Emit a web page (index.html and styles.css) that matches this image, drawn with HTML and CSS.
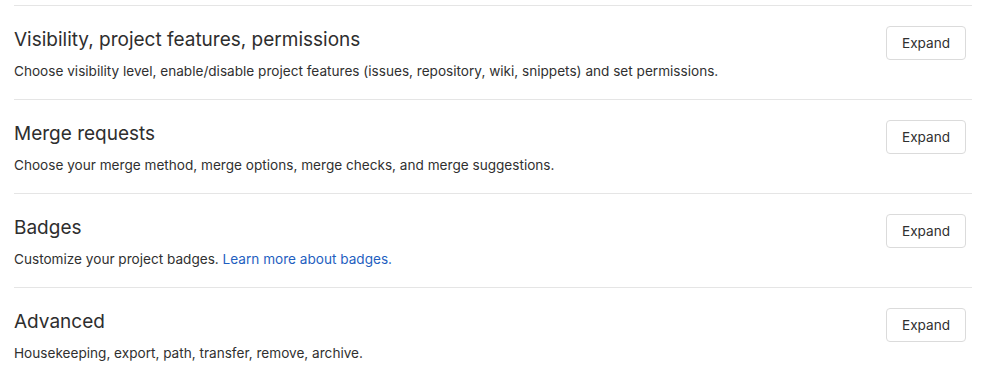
FILE: index.html
```html
<!DOCTYPE html>
<html lang="en">
<head>
    <meta charset="UTF-8">
    <title>Project settings</title>
    <link rel="stylesheet" href="styles.css">
</head>
<body>
    <div class="settings">
        <section class="settings-section">
            <div class="settings-header">
                <div>
                    <h4>Visibility, project features, permissions</h4>
                    <p>Choose visibility level, enable/disable project features (issues, repository, wiki, snippets) and set permissions.</p>
                </div>
                <button class="btn">Expand</button>
            </div>
        </section>

        <section class="settings-section">
            <div class="settings-header">
                <div>
                    <h4>Merge requests</h4>
                    <p>Choose your merge method, merge options, merge checks, and merge suggestions.</p>
                </div>
                <button class="btn">Expand</button>
            </div>
        </section>

        <section class="settings-section">
            <div class="settings-header">
                <div>
                    <h4>Badges</h4>
                    <p>Customize your project badges. <a href="#">Learn more about badges.</a></p>
                </div>
                <button class="btn">Expand</button>
            </div>
        </section>

        <section class="settings-section">
            <div class="settings-header">
                <div>
                    <h4>Advanced</h4>
                    <p>Housekeeping, export, path, transfer, remove, archive.</p>
                </div>
                <button class="btn">Expand</button>
            </div>
        </section>
    </div>
</body>
</html>
```

FILE: styles.css
```css
* {
    margin: 0;
    padding: 0;
    box-sizing: border-box;
}

body {
    font-family: Inter, "Noto Sans", sans-serif;
    background: #fff;
    color: #303030;
    padding: 5px 14px 0 14px;
}

.settings {
    width: 958px;
}

.settings-section {
    border-top: 1px solid #e5e5e5;
    height: 94px;
    padding-top: 20px;
}

.settings-header {
    display: flex;
    justify-content: space-between;
    align-items: flex-start;
}

h4 {
    font-size: 19px;
    font-weight: 400;
    line-height: 28px;
    color: #2e2e2e;
}

p {
    font-size: 13.6px;
    line-height: 20px;
    margin-top: 7px;
    color: #303030;
}

a {
    color: #1f5fbf;
    text-decoration: none;
}

.btn {
    font-family: inherit;
    font-size: 13.6px;
    color: #303030;
    background: #fff;
    border: 1px solid #dbdbdb;
    border-radius: 4px;
    width: 80px;
    height: 34px;
    margin-right: 6px;
}
```
